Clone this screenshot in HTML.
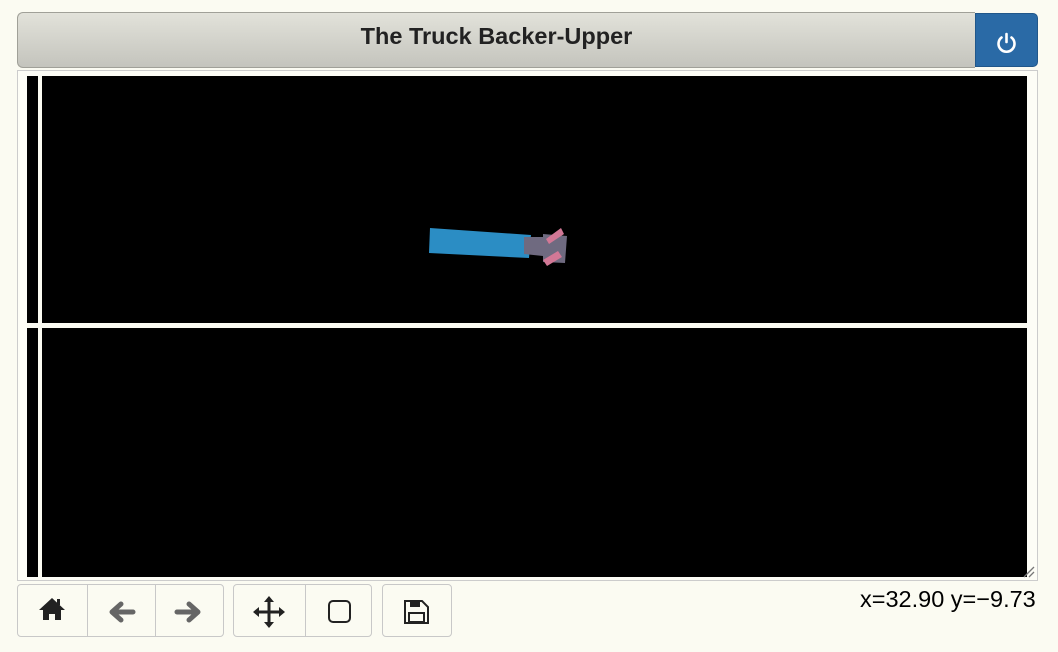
<!DOCTYPE html>
<html><head><style>
body{margin:0;width:1058px;height:652px;background:#fbfbf2;font-family:"Liberation Sans",sans-serif;position:relative;overflow:hidden}
.title{position:absolute;left:17px;top:12px;width:958px;height:56px;border:1px solid #a0a098;border-right:none;border-radius:6px 0 0 6px;background:linear-gradient(#e2e2da,#c4c4bd);box-sizing:border-box;text-align:center;line-height:46px;font-weight:bold;font-size:23.5px;color:#222;padding-left:0}
.pw{position:absolute;left:975px;top:13px;width:63px;height:54px;background:#2a6aa6;border-radius:0 5px 5px 0;border:1px solid #21578a;box-sizing:border-box}
.frame{position:absolute;left:17px;top:70px;width:1021px;height:511px;border:1px solid #ccc;box-sizing:border-box;background:#fdfdf6}
.cv{position:absolute;left:27px;top:76px;width:1000px;height:501px;background:#000}
.btn{position:absolute;top:584px;height:53px;border:1px solid #c8c8c8;box-sizing:border-box;background:#fbfbf2}
.coord{position:absolute;left:860px;top:586px;font-size:23.5px;color:#000}
</style></head><body>
<div class="title">The Truck Backer-Upper</div>
<div class="pw"><svg width="63" height="54" viewBox="0 0 63 54"><path d="M25.5 23.5a8 8 0 1 0 10 0" fill="none" stroke="#fff" stroke-width="2.6" stroke-linecap="round"/><path d="M30.5 20v8" stroke="#fff" stroke-width="2.6" stroke-linecap="round"/></svg></div>
<div class="frame"></div>
<div class="cv">
<div style="position:absolute;left:11px;top:0;width:4px;height:501px;background:#fbfbf2"></div>
<div style="position:absolute;left:0;top:247px;width:1000px;height:5px;background:#fbfbf2"></div>
<svg style="position:absolute;left:0;top:0" width="1000" height="501">
<polygon points="403,152 504,159 502,182 402,177" fill="#2b8dc4"/>
<polygon points="497,161 516,161 516,158 540,160 538,187 516,186 516,180 497,178" fill="#6f6a80"/>
<polygon points="519,163 534,152 537,158 522,168" fill="#d27896"/>
<polygon points="516,184 531,175 535,181 520,190" fill="#d27896"/>
</svg>
</div>
<svg style="position:absolute;left:1022px;top:565px" width="14" height="14"><path d="M2 12L12 2M7 12L12 7" stroke="#777" stroke-width="1.3"/></svg>
<div class="btn" style="left:17px;width:71px;border-radius:4px 0 0 4px"></div>
<div class="btn" style="left:87px;width:69px"></div>
<div class="btn" style="left:155px;width:69px;border-radius:0 4px 4px 0"></div>
<div class="btn" style="left:233px;width:73px;border-radius:4px 0 0 4px"></div>
<div class="btn" style="left:305px;width:67px;border-radius:0 4px 4px 0"></div>
<div class="btn" style="left:382px;width:70px;border-radius:4px"></div>
<svg style="position:absolute;left:0;top:584px" width="470" height="53">
<path d="M39 26L52 14L65 26H61V36H55V30H49V36H43V26Z" fill="#222"/><rect x="57" y="15" width="3" height="6" fill="#222"/>
<path d="M133 28H113M121 20L112 28L121 36" stroke="#666" stroke-width="5" fill="none" stroke-linecap="round" stroke-linejoin="round"/>
<path d="M177 28H197M189 20L198 28L189 36" stroke="#666" stroke-width="5" fill="none" stroke-linecap="round" stroke-linejoin="round"/>
<path d="M269 15V41M256 28H282" stroke="#222" stroke-width="3"/>
<path d="M269 12L264 18H274ZM269 44L264 38H274ZM253 28L259 23V33ZM285 28L279 23V33Z" fill="#222"/>
<rect x="329" y="17" width="21" height="21" rx="4" fill="none" stroke="#222" stroke-width="2"/>
<path d="M405 17H422L428 23V39H405Z" fill="none" stroke="#222" stroke-width="2"/><rect x="410" y="17" width="10" height="6" fill="#222"/><rect x="409" y="29" width="15" height="9" fill="none" stroke="#222" stroke-width="2"/>
</svg>
<div class="coord">x=32.90 y=−9.73</div>
</body></html>
